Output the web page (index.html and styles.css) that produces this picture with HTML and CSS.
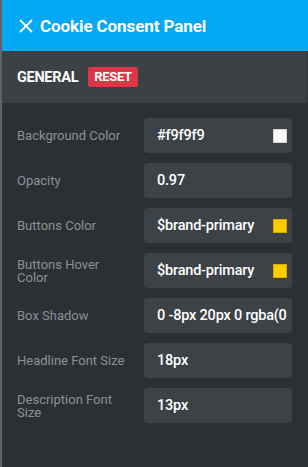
FILE: index.html
```html
<!DOCTYPE html>
<html>
<head>
<meta charset="utf-8">
<link rel="stylesheet" href="styles.css">
</head>
<body>
<div class="panel">
  <header class="topbar">
    <svg class="close" width="14" height="14" viewBox="0 0 14 14"><path d="M1 1L13 13M13 1L1 13" stroke="#fff" stroke-width="1.8" fill="none"/></svg>
    <span class="title">Cookie Consent Panel</span>
  </header>
  <div class="section">
    <span class="section-name">GENERAL</span>
    <span class="reset">RESET</span>
  </div>
  <div class="fields">
    <div class="row"><label class="lbl">Background Color</label><div class="input"><span class="val">#f9f9f9</span><span class="swatch white"></span></div></div>
    <div class="row"><label class="lbl">Opacity</label><div class="input"><span class="val">0.97</span></div></div>
    <div class="row"><label class="lbl">Buttons Color</label><div class="input"><span class="val">$brand-primary</span><span class="swatch yellow"></span></div></div>
    <div class="row"><label class="lbl">Buttons Hover Color</label><div class="input"><span class="val">$brand-primary</span><span class="swatch yellow"></span></div></div>
    <div class="row"><label class="lbl">Box Shadow</label><div class="input"><span class="val">0 -8px 20px 0 rgba(0,0,0,0.1)</span></div></div>
    <div class="row"><label class="lbl">Headline Font Size</label><div class="input"><span class="val">18px</span></div></div>
    <div class="row"><label class="lbl">Description Font Size</label><div class="input"><span class="val">13px</span></div></div>
  </div>
</div>
</body>
</html>
```
FILE: styles.css
```css
html, body { margin: 0; padding: 0; }
body { background: #2b3035; font-family: Roboto, "Liberation Sans", sans-serif; }
.panel { width: 308px; height: 467px; display: flex; flex-direction: column; background: #2b3035; border-left: 2px solid #5f6468; box-sizing: border-box; overflow: hidden; }
.topbar { height: 51px; background: #03a9f4; display: flex; align-items: center; padding-left: 19px; gap: 7px; margin-left: -2px; flex-shrink: 0; }
.close { display: block; }
.title { color: #fff; font-weight: 700; font-size: 17px; letter-spacing: -0.1px; }
.section { height: 52px; background: #3c4146; display: flex; align-items: center; padding-left: 15px; gap: 10px; flex-shrink: 0; border-right: 2px solid #33383c; }
.section-name { color: #fff; font-weight: 700; font-size: 14.5px; letter-spacing: -0.3px; }
.reset { background: #dc3545; color: #fff; font-weight: 700; font-size: 13px; line-height: 20px; padding: 0 6px; border-radius: 2px; letter-spacing: -0.3px; }
.fields { display: flex; flex-direction: column; gap: 10px; padding: 15px 16px 0 15px; }
.row { display: flex; align-items: center; height: 35px; }
.lbl { width: 127px; color: #8b9095; font-size: 13px; line-height: 13px; padding-right: 15px; box-sizing: border-box; }
.input { width: 148px; height: 35px; background: #3d4247; border-radius: 4px; display: flex; align-items: center; padding: 0 5px 0 13px; box-sizing: border-box; overflow: hidden; }
.val { color: #fff; font-size: 14.5px; font-weight: 500; white-space: nowrap; flex: 1; overflow: hidden; letter-spacing: -0.2px; }
.swatch { width: 14px; height: 14px; flex-shrink: 0; margin-left: 4px; box-sizing: border-box; border: 1px solid rgba(0,0,0,0.15); }
.white { background: #f9f9f9; }
.yellow { background: #ffcc00; }
```
